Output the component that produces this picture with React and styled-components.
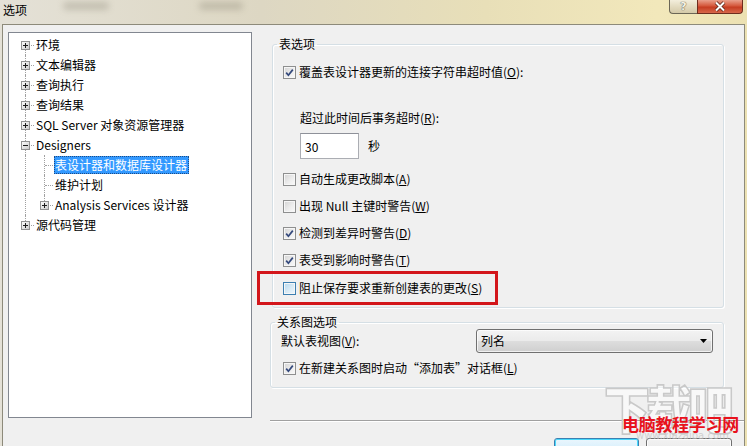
import React from "react";
import styled, { createGlobalStyle, css } from "styled-components";

const GlobalStyle = createGlobalStyle`
  html, body {
    margin: 0;
    padding: 0;
    background: #f0f0f0;
  }
  body {
    font-family: "Noto Sans CJK SC", "Noto Sans", sans-serif;
    font-size: 12px;
    color: #000;
  }
`;

const Window = styled.div`
  position: relative;
  width: 747px;
  height: 446px;
  overflow: hidden;
  display: flex;
  flex-direction: column;
  background: linear-gradient(90deg, #e4e1d7 0%, #ddd7c3 35%, #e8dfb8 65%, #f2e8bb 88%, #ece1b2 100%);
`;

const TitleBar = styled.div`
  height: 24px;
  flex: none;
  display: flex;
  align-items: flex-start;
`;

const Title = styled.div`
  padding: 2px 0 0 3px;
  line-height: 16px;
  font-size: 12px;
`;

const Blur = styled.span`
  margin: 2px 0 0 ${p => p.$ml}px;
  width: ${p => p.$w}px;
  height: 8px;
  border-radius: 4px;
  background: rgba(90, 85, 70, 0.22);
  filter: blur(3px);
`;

const CaptionButtons = styled.div`
  margin-left: auto;
  margin-right: 4px;
  display: flex;
`;

const CaptionButton = styled.div`
  height: 14px;
  box-sizing: border-box;
  display: flex;
  align-items: center;
  justify-content: center;
  border: 1px solid #6b6656;
  border-top: none;
  ${p =>
    p.$close
      ? css`
          width: 46px;
          border-color: #6e2d1e;
          border-radius: 0 0 4px 0;
          background: linear-gradient(#e9a08c 0%, #d5583c 45%, #c63d22 55%, #d7674a 100%);
        `
      : css`
          width: 28px;
          border-right: none;
          border-radius: 0 0 0 4px;
          background: linear-gradient(#f3eedc 0%, #e3dbc0 50%, #d3c9a8 100%);
        `}
`;

const HelpGlyph = styled.span`
  font-family: "DejaVu Sans", sans-serif;
  font-weight: bold;
  font-size: 11px;
  line-height: 12px;
  color: #f4f1e6;
  text-shadow: 0 0 1px #5d584a, 0 0 1px #5d584a;
`;

const Frame = styled.div`
  flex: 1;
  display: flex;
  padding: 0 2px 0 2px;
  min-height: 0;
`;

const Client = styled.div`
  flex: 1;
  display: flex;
  align-items: flex-start;
  background: #f0f0f0;
  border: 1px solid #8d8a7a;
  border-bottom: none;
  padding: 7px 0 0 5px;
`;

const TreePanel = styled.div`
  width: 244px;
  height: 386px;
  box-sizing: border-box;
  flex: none;
  background: #fff;
  border: 1px solid #828790;
  padding: 2px 0 0 7px;
`;

const TreeRow = styled.div`
  display: flex;
  align-items: center;
  height: 20px;
`;

const Gutter = styled.span`
  position: relative;
  flex: none;
  width: 19px;
  height: 20px;
  &::before {
    content: "";
    position: absolute;
    left: 9px;
    top: ${p => (p.$up ? "0" : "10px")};
    bottom: ${p => (p.$down ? "0" : "10px")};
    border-left: ${p => (p.$up || p.$down ? "1px dotted #a0a0a0" : "none")};
  }
  &::after {
    content: "";
    position: absolute;
    left: 10px;
    right: 1px;
    top: 10px;
    border-top: ${p => (p.$branch ? "1px dotted #a0a0a0" : "none")};
  }
`;

const BoxSvg = styled.svg`
  position: absolute;
  left: 5px;
  top: 6px;
  z-index: 1;
`;

const NodeLabel = styled.span`
  height: 18px;
  line-height: 18px;
  padding: 0 2px 0 1px;
  white-space: nowrap;
  ${p =>
    p.$selected &&
    css`
      background: #3399ff;
      color: #fff;
      outline: 1px dotted #1d4c86;
      outline-offset: -1px;
    `}
`;

const Page = styled.div`
  flex: 1;
  margin-left: 18px;
  padding-top: 5px;
  display: flex;
  flex-direction: column;
`;

const Group = styled.fieldset`
  margin: ${p => (p.$first ? "0" : "7px")} 20px 0 ${p => p.$inset}px;
  padding: ${p => p.$top}px 10px 9px 10px;
  border: 1px solid #d5dfe5;
  border-radius: 3px;
  box-shadow: inset 1px 1px 0 #fff, 1px 1px 0 #fff;
  min-width: 0;
`;

const Legend = styled.legend`
  margin-left: -6px;
  padding: 0 2px;
  line-height: 14px;
  font-size: 12px;
`;

const Row = styled.div`
  position: relative;
  display: flex;
  align-items: center;
  gap: ${p => p.$gap ?? 3}px;
  height: ${p => p.$h || 20}px;
  line-height: 20px;
  margin-top: ${p => p.$mt || 0}px;
  margin-left: ${p => p.$ml || 0}px;
  white-space: nowrap;
`;

const CheckBox = styled.span`
  flex: none;
  width: 13px;
  height: 13px;
  box-sizing: border-box;
  display: flex;
  align-items: center;
  justify-content: center;
  border: 1px solid ${p => (p.$hot ? "#3c7fb1" : "#8e8f8f")};
  box-shadow: inset 0 0 0 1px #f6f6f6;
  background: ${p =>
    p.$hot
      ? "linear-gradient(135deg, #b6d9ee 0%, #dcecf6 60%, #eef7fc 100%)"
      : "linear-gradient(135deg, #d3d3d3 0%, #ececec 55%, #fafafa 100%)"};
`;

const Highlight = styled.span`
  position: absolute;
  left: -26px;
  top: -7px;
  width: 241px;
  height: 34px;
  box-sizing: border-box;
  border: 3px solid #d3161b;
  pointer-events: none;
`;

const NumberInput = styled.input`
  width: 59px;
  height: 26px;
  box-sizing: border-box;
  margin: 0;
  padding: 0 0 0 4px;
  border: 1px solid #abadb3;
  border-top-color: #8e9199;
  background: #fff;
  font-family: inherit;
  font-size: 12px;
  color: #000;
  outline: none;
`;

const Unit = styled.span`
  margin-left: 9px;
`;

const Select = styled.div`
  margin-left: auto;
  width: 237px;
  height: 24px;
  box-sizing: border-box;
  display: flex;
  align-items: center;
  justify-content: space-between;
  padding: 0 5px 0 4px;
  border: 1px solid #707070;
  border-radius: 3px;
  background: linear-gradient(#f3f3f3 0%, #ebebeb 48%, #dddddd 52%, #cfcfcf 100%);
  box-shadow: inset 0 0 0 1px rgba(255, 255, 255, 0.7);
`;

const Separator = styled.div`
  margin-top: 32px;
  height: 0;
  border-top: 1px solid #a0a0a0;
  border-bottom: 1px solid #fff;
`;

const ButtonRow = styled.div`
  display: flex;
  justify-content: flex-end;
  gap: 7px;
  margin: 16px 12px 0 0;
`;

const DialogButton = styled.div`
  width: ${p => p.$w}px;
  height: 23px;
  box-sizing: border-box;
  display: flex;
  align-items: center;
  justify-content: center;
  border: 1px solid ${p => (p.$default ? "#3c7fb1" : "#707070")};
  border-radius: 3px;
  background: ${p =>
    p.$default
      ? "linear-gradient(#eaf6fd 0%, #d9f0fc 48%, #bee6fd 52%, #a7d9f5 100%)"
      : "linear-gradient(#f2f2f2 0%, #ebebeb 48%, #dddddd 52%, #cfcfcf 100%)"};
  box-shadow: inset 0 0 0 1px ${p => (p.$default ? "#48d8fb" : "rgba(255,255,255,0.8)")};
  padding-top: 8px;
`;

const Watermark = styled.div`
  position: absolute;
  left: 604px;
  top: 381px;
  width: 143px;
  height: 65px;
  pointer-events: none;
  display: flex;
  flex-direction: column;
  align-items: flex-start;
`;

const LogoText = styled.div`
  position: relative;
  z-index: 0;
  font-size: 46px;
  line-height: 46px;
  font-weight: 900;
  letter-spacing: -4px;
  color: rgba(255, 255, 255, 0.55);
  -webkit-text-stroke: 1.5px #c9c9c9;
  transform: scaleY(1.12);
  transform-origin: top left;
`;

const SiteName = styled.div`
  position: relative;
  z-index: 2;
  margin: -14px 0 0 18px;
  font-size: 17px;
  line-height: 22px;
  font-weight: bold;
  color: #e8121c;
  letter-spacing: -0.3px;
`;

const SiteUrl = styled.div`
  position: relative;
  z-index: 1;
  margin: -4px 0 0 32px;
  font-family: "DejaVu Sans", sans-serif;
  font-size: 10px;
  line-height: 10px;
  color: rgba(195, 195, 195, 0.7);
`;

function ExpandBox({ open }) {
  return (
    <BoxSvg width="9" height="9" viewBox="0 0 9 9">
      <defs>
        <linearGradient id="bxg" x1="0" y1="0" x2="1" y2="1">
          <stop offset="0" stopColor="#ffffff" />
          <stop offset="1" stopColor="#c9c9c9" />
        </linearGradient>
      </defs>
      <rect x="0.5" y="0.5" width="8" height="8" fill="url(#bxg)" stroke="#929292" />
      <path d="M2 4.5h5" stroke="#1a1a1a" />
      {!open && <path d="M4.5 2v5" stroke="#1a1a1a" />}
    </BoxSvg>
  );
}

function Check({ checked, hot }) {
  return (
    <CheckBox $hot={hot}>
      {checked && (
        <svg width="9" height="9" viewBox="0 0 9 9">
          <path d="M1.2 4.6 L3.4 7.2 L7.8 1.6" fill="none" stroke="#34497c" strokeWidth="1.7" />
        </svg>
      )}
    </CheckBox>
  );
}

const treeRows = [
  { text: "环境", rails: [], up: false, down: true, box: "closed" },
  { text: "文本编辑器", rails: [], up: true, down: true, box: "closed" },
  { text: "查询执行", rails: [], up: true, down: true, box: "closed" },
  { text: "查询结果", rails: [], up: true, down: true, box: "closed" },
  { text: "SQL Server 对象资源管理器", rails: [], up: true, down: true, box: "closed" },
  { text: "Designers", rails: [], up: true, down: true, box: "open" },
  { text: "表设计器和数据库设计器", rails: [true], up: true, down: true, selected: true },
  { text: "维护计划", rails: [true], up: true, down: true },
  { text: "Analysis Services 设计器", rails: [true], up: true, down: false, box: "closed" },
  { text: "源代码管理", rails: [], up: true, down: false, box: "closed" }
];

const tableOptions = [
  { key: "A", text: "自动生成更改脚本", checked: false, mt: 10 },
  { key: "W", text: "出现 Null 主键时警告", checked: false, mt: 7 },
  { key: "D", text: "检测到差异时警告", checked: true, mt: 7 },
  { key: "T", text: "表受到影响时警告", checked: true, mt: 7 }
];

export default function App() {
  return (
    <Window>
      <GlobalStyle />
      <TitleBar>
        <Title>选项</Title>
        <Blur $ml={36} $w={46} />
        <Blur $ml={90} $w={44} />
        <CaptionButtons>
          <CaptionButton>
            <HelpGlyph>?</HelpGlyph>
          </CaptionButton>
          <CaptionButton $close>
            <svg width="14" height="11" viewBox="0 0 14 11">
              <path d="M3 1.5 L11 9.5 M11 1.5 L3 9.5" stroke="#5a2418" strokeWidth="3.6" />
              <path d="M3 1.5 L11 9.5 M11 1.5 L3 9.5" stroke="#ffffff" strokeWidth="2" />
            </svg>
          </CaptionButton>
        </CaptionButtons>
      </TitleBar>
      <Frame>
        <Client>
          <TreePanel>
            {treeRows.map(row => (
              <TreeRow key={row.text}>
                {row.rails.map((rail, i) => (
                  <Gutter key={i} $up={rail} $down={rail} />
                ))}
                <Gutter $up={row.up} $down={row.down} $branch>
                  {row.box && <ExpandBox open={row.box === "open"} />}
                </Gutter>
                <NodeLabel $selected={row.selected}>{row.text}</NodeLabel>
              </TreeRow>
            ))}
          </TreePanel>
          <Page>
            <Group $first $inset={2} $top={11}>
              <Legend>表选项</Legend>
              <Row>
                <Check checked />
                <span>
                  覆盖表设计器更新的连接字符串超时值(<u>O</u>):
                </span>
              </Row>
              <Row $mt={26} $ml={17}>
                <span>
                  超过此时间后事务超时(<u>R</u>):
                </span>
              </Row>
              <Row $mt={5} $ml={17} $h={26} $gap={0}>
                <NumberInput value="30" readOnly />
                <Unit>秒</Unit>
              </Row>
              {tableOptions.map(opt => (
                <Row key={opt.key} $mt={opt.mt}>
                  <Check checked={opt.checked} />
                  <span>
                    {opt.text}(<u>{opt.key}</u>)
                  </span>
                </Row>
              ))}
              <Row $mt={8}>
                <Check hot />
                <span>
                  阻止保存要求重新创建表的更改(<u>S</u>)
                </span>
                <Highlight />
              </Row>
            </Group>
            <Group $inset={0} $top={0}>
              <Legend>关系图选项</Legend>
              <Row $h={24}>
                <span>
                  默认表视图(<u>V</u>):
                </span>
                <Select>
                  <span>列名</span>
                  <svg width="7" height="4" viewBox="0 0 7 4">
                    <path d="M0 0 H7 L3.5 4 Z" fill="#000" />
                  </svg>
                </Select>
              </Row>
              <Row $mt={5} $ml={2}>
                <Check checked />
                <span>
                  在新建关系图时启动“添加表”对话框(<u>L</u>)
                </span>
              </Row>
            </Group>
            <Separator />
            <ButtonRow>
              <DialogButton $default $w={85}>确定</DialogButton>
              <DialogButton $w={86}>取消</DialogButton>
            </ButtonRow>
          </Page>
        </Client>
      </Frame>
      <Watermark>
        <LogoText>下载吧</LogoText>
        <SiteName>电脑教程学习网</SiteName>
        <SiteUrl>www.xiazaiba.com</SiteUrl>
      </Watermark>
    </Window>
  );
}
